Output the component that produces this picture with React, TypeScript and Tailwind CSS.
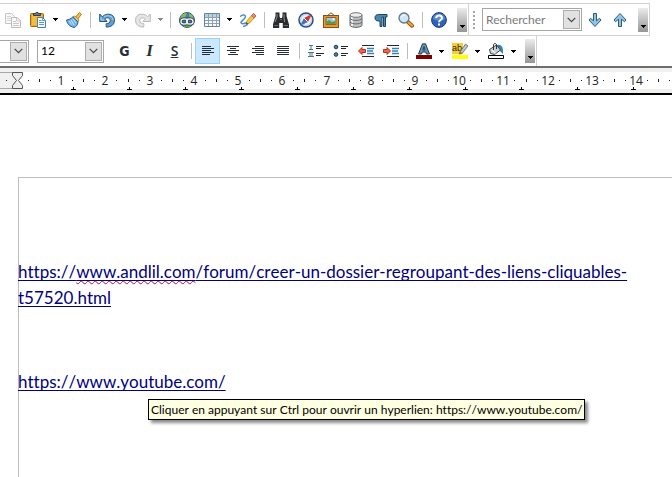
import React, { type ReactNode } from "react";

function Icon({ children }: { children: ReactNode }) {
  return (
    <svg width="16" height="16" viewBox="0 0 16 16" fill="none" aria-hidden="true">
      {children}
    </svg>
  );
}

function Tool({ label, active, children }: { label: string; active?: boolean; children: ReactNode }) {
  return (
    <button
      type="button"
      aria-label={label}
      className={
        active
          ? "flex h-[26px] w-[25px] shrink-0 items-center justify-center border border-[#99d1ff] bg-[#cce8ff]"
          : "flex h-[26px] w-[25px] shrink-0 items-center justify-center"
      }
    >
      {children}
    </button>
  );
}

function Caret({ label, muted }: { label: string; muted?: boolean }) {
  return (
    <button type="button" aria-label={label} className="flex h-[26px] w-[11px] shrink-0 items-center justify-center">
      <svg width="5" height="3" viewBox="0 0 5 3" shapeRendering="crispEdges" aria-hidden="true">
        <path d="M0 0h5v1H4v1H3v1H2V2H1V1H0z" fill={muted ? "#8c8c8c" : "#000"} />
      </svg>
    </button>
  );
}

function Sep() {
  return (
    <div className="flex w-2 shrink-0 justify-center">
      <div className="h-4 w-px bg-[#bdbdbd]" />
    </div>
  );
}

function Overflow({ label }: { label: string }) {
  return (
    <button
      type="button"
      aria-label={label}
      className="flex h-6 w-[10px] shrink-0 items-end justify-center bg-linear-to-b from-[#ececec] to-[#969696] pb-1"
    >
      <svg width="5" height="3" viewBox="0 0 5 3" shapeRendering="crispEdges" aria-hidden="true">
        <path d="M0 0h5v1H4v1H3v1H2V2H1V1H0z" fill="#000" />
      </svg>
    </button>
  );
}

function Chevron() {
  return (
    <span className="pointer-events-none flex h-[19px] w-[17px] shrink-0 items-center justify-center border border-[#adadad] bg-[#e1e1e1]">
      <svg width="9" height="6" viewBox="0 0 9 6" fill="none" aria-hidden="true">
        <path d="M.7.8 4.5 4.6 8.3.8" stroke="#444" strokeWidth="1.2" />
      </svg>
    </span>
  );
}

const CopyIcon = () => (
  <Icon>
    <path d="M.5 1.5h6l3 3v7h-9z" fill="#fafafa" stroke="#c6c6c6" />
    <path d="M2 4.5h4M2 6.5h5M2 8.5h5" stroke="#d2d2d2" />
    <path d="M6.500 5.500h5.500l3.500 3v7h-9z" fill="#fafafa" stroke="#bcbcbc" />
    <path d="M11.500 5.500v3.500h4M8 9.500h3M8 11.500h6M8 13.500h6" stroke="#c8c8c8" />
  </Icon>
);

const PasteIcon = () => (
  <Icon>
    <rect x=".5" y="1.500" width="13" height="13" rx="1" fill="#e9a820" stroke="#a8690b" />
    <path d="M2 3h10v10H2z" fill="#f3bd3b" />
    <path d="M3.500 3.500v-2h2L6 .5h2l.5 1h2v2z" fill="#6f7780" stroke="#38414b" />
    <path d="M7.500 5.500h5l3 3v7h-8z" fill="#f4faff" stroke="#4682b1" />
    <path d="M12.500 5.500v3h3M9 8.500h2.500M9 10.500h5M9 12.500h5" stroke="#5b9bca" />
  </Icon>
);

const BrushIcon = () => (
  <Icon>
    <path d="m9.500 5 4-4.500 2 1.800-3.700 4.800z" fill="#f4bd3b" stroke="#a66b13" strokeWidth=".8" />
    <path d="M7 4.500 9 4l4 4-1 2z" fill="#f0d084" stroke="#9a7a31" strokeWidth=".8" />
    <path d="M6.800 5C5 7 2.500 7.600.6 8c.4 3.500 3 6.500 7.400 7.500 2-.6 3.500-2.500 4-5.300z" fill="#72b3e8" stroke="#21589a" />
    <path d="m3 9 2.500 3.500M5 8l3 5M7 7l3 4" stroke="#c7e5fb" />
  </Icon>
);

const curve = "M.7 2v7.500h7.500L5.800 7.200C7 5 11.200 5.300 11.200 8.600c0 2.300-1.700 3.100-4 3.100v3.300c5 .3 8.300-2.400 8.300-6.800C15.500 1.800 8 .2 3.300 4.700z";

const UndoIcon = () => (
  <Icon>
    <path d={curve} fill="#5f9ecf" stroke="#27577f" />
    <path d="M2 5v3h3M5 5c3.500-2.500 9-1 9 3" stroke="#b6d9f0" />
  </Icon>
);

const RedoIcon = () => (
  <Icon>
    <g transform="matrix(-1 0 0 1 16 0)">
      <path d={curve} fill="#e5e5e5" stroke="#b9b9b9" />
    </g>
  </Icon>
);

const GlobeIcon = () => (
  <Icon>
    <circle cx="8" cy="8" r="7.400" fill="#407fab" stroke="#28536d" />
    <path d="M1.500 5c1.500-3 4-4.200 6.500-4L7 3.500 5 7H1zM10 1.200c3 1 4.500 3 5 6L12 7l-2-3z" fill="#88bd56" />
    <path d="M2 11h12l-3 4H5z" fill="#67a348" />
    <rect x="2" y="7" width="6.500" height="5" rx="2.500" stroke="#263944" strokeWidth="3" />
    <rect x="7.500" y="7" width="6.500" height="5" rx="2.500" stroke="#263944" strokeWidth="3" />
    <rect x="2" y="7" width="6.500" height="5" rx="2.500" stroke="#e6edf0" strokeWidth="1.500" />
    <rect x="7.500" y="7" width="6.500" height="5" rx="2.500" stroke="#e6edf0" strokeWidth="1.500" />
  </Icon>
);

const TableIcon = () => (
  <Icon>
    <path d="M.5 1.500h15v13H.5z" fill="#f5f9fc" stroke="#68829a" />
    <path d="M1 2h14v3H1z" fill="#b8d0e2" />
    <path d="M1 5.500h14M1 8.500h14M1 11.500h14M4.500 2v12M8.500 2v12M12.500 2v12" stroke="#8ba2b5" />
  </Icon>
);

const DrawIcon = () => (
  <Icon>
    <path d="M0 4.500c5-3 7-.5 4 2.500s-4 3.500-2 4.500 6-2 6-.5-3 3-5 3.500" stroke="#4b8fd2" strokeWidth="1.500" />
    <path d="m6 12.500 1-3.700L13.500 1.500 16 4 9.500 11z" fill="#f5cd45" stroke="#a77b19" strokeWidth=".8" />
    <path d="m11.500 3.700 2-2.300L16 3.800l-2 2.300z" fill="#e68a83" stroke="#b54f4b" strokeWidth=".7" />
    <path d="m6 12.500.5-2 1.500 1z" fill="#333" />
  </Icon>
);

const BinocularsIcon = () => (
  <Icon>
    <path d="M2.500.5h4V4l.5 2h2l.5-2V.5h4V4L15 9l1 3.500V16H9.800v-5H6.200v5H0v-3.500L1 9l1.500-5z" fill="#292b2d" />
    <path d="M4 2v3L2 10M11 2v3l.5 5" stroke="#8e9295" />
    <path d="M1 13.500h4.200M10.800 13.500H15M7 7.500h2" stroke="#686c70" />
  </Icon>
);

const CompassIcon = () => (
  <Icon>
    <circle cx="8" cy="8" r="7" fill="#edf4fa" stroke="#244e87" strokeWidth="1.500" />
    <circle cx="8" cy="8" r="5.400" stroke="#9eb5cf" strokeWidth=".7" />
    <path d="M13.800 2.200 6 6l4 4z" fill="#d83225" />
    <path d="M2.200 13.800 6 6l4 4z" fill="#3e73b7" />
    <path d="m6.300 6.300 3.300 3.300" stroke="#fff" />
  </Icon>
);

const GalleryIcon = () => (
  <Icon>
    <path d="M4 4 8 .8 12 4" stroke="#78542c" />
    <rect x=".5" y="3.500" width="15" height="12" fill="#e29b32" stroke="#8b4d13" />
    <path d="M3 5.500h10v7H3z" fill="#92cbed" stroke="#a35c17" />
    <path d="M3.500 9.500 6 8l3 2 3.500-1v3h-9z" fill="#609a39" />
    <circle cx="10.500" cy="7.300" r="1" fill="#fff" />
  </Icon>
);

const DatabaseIcon = () => (
  <Icon>
    <path d="M2 3v10.500C4 16 12 16 14 13.500V3z" fill="#bfc0c1" stroke="#656769" />
    <path d="M4 4v10" stroke="#f1f1f1" strokeWidth="2" />
    <path d="M2 6.500C4 9 12 9 14 6.500M2 10c2 2.500 10 2.500 12 0" stroke="#66696b" />
    <ellipse cx="8" cy="3" rx="6" ry="2.300" fill="#eee" stroke="#6e7072" />
  </Icon>
);

const PilcrowIcon = () => (
  <Icon>
    <path d="M14 2.500H5.700C3 2.500 2 4 2 5.800c0 2 1 3.200 3.500 3.200H7v5.500h2V5h1.500v9.500h2V5H14z" fill="#4b87ae" stroke="#1c4660" />
  </Icon>
);

const ZoomIcon = () => (
  <Icon>
    <path d="m10 10 4 3.700" stroke="#9b5d13" strokeWidth="4" strokeLinecap="round" />
    <path d="m10.500 10.500 3.500 3" stroke="#f2a738" strokeWidth="2" strokeLinecap="round" />
    <circle cx="6" cy="6" r="5" fill="#cce8f8" stroke="#68767f" strokeWidth="1.300" />
    <path d="M3.500 5.500c.5-2 2-2.500 3.500-2.500" stroke="#fff" />
  </Icon>
);

const HelpIcon = () => (
  <Icon>
    <circle cx="8" cy="8" r="7.400" fill="#2f62b6" stroke="#183d82" />
    <path d="M2 7c.3-7 11.500-7 12 0-3 2-8 2-12 0z" fill="#5c8cd2" />
    <path d="M5.300 6C5.300 2.800 11 2.700 11 6c0 2-3 2-3 4.200" stroke="#fff" strokeWidth="2" />
    <path d="M7 11.500h2v2H7z" fill="#fff" />
  </Icon>
);

const ArrowIcon = ({ up }: { up?: boolean }) => (
  <Icon>
    <g transform={up ? "rotate(180 8 8)" : undefined}>
      <path d="M6.500 1.500h3v7.300l3-2.500L14 8l-6 6.500L2 8l1.500-1.700 3 2.500z" fill="#93c4e5" stroke="#285a7d" strokeLinejoin="round" />
    </g>
  </Icon>
);

const linePaths = {
  left: "M2 3.500h9M2 5.500h12M2 7.500h9M2 9.500h12M2 11.500h8",
  center: "M2 3.500h12M5 5.500h6M2 7.500h12M5 9.500h6M3 11.500h10",
  right: "M5 3.500h9M2 5.500h12M5 7.500h9M2 9.500h12M6 11.500h8",
  justify: "M2 3.500h12M2 5.500h12M2 7.500h12M2 9.500h12M2 11.500h12",
};

const AlignIcon = ({ kind }: { kind: keyof typeof linePaths }) => (
  <Icon>
    <path d={linePaths[kind]} stroke="#222e38" />
  </Icon>
);

const NumberedIcon = () => (
  <Icon>
    <path d="M1 2.500h4M3 2v5M1 6.500h4M0 9.500h6M2 9v5M4 9v5M0 13.500h6" stroke="#48788e" />
    <path d="M8 3.500h8M8 5.500h5M8 10.500h8M8 12.500h5" stroke="#20262b" />
  </Icon>
);

const BulletsIcon = () => (
  <Icon>
    <circle cx="3" cy="4" r="1.800" fill="#4d7f9d" stroke="#183d57" />
    <circle cx="3" cy="11.500" r="1.800" fill="#4d7f9d" stroke="#183d57" />
    <path d="M8 3.500h7M8 5.500h5M8 10.500h7M8 12.500h5" stroke="#20262b" />
  </Icon>
);

const IndentIcon = ({ out }: { out?: boolean }) => (
  <Icon>
    <path d="M4 2.500h12M4 13.500h12" stroke="#20262b" />
    <path d="M9 5.500h7M9 8h6M9 10.500h7" stroke="#3783ba" strokeWidth="1.500" />
    <g transform={out ? undefined : "matrix(-1 0 0 1 8 0)"}>
      <path d="M.5 8 4 4.500v2h3.500v3H4v2z" fill="#f16843" stroke="#a92316" strokeWidth=".9" />
    </g>
  </Icon>
);

const FontColorIcon = () => (
  <Icon>
    <path d="M2.500 11 6.500.8h3L13.500 11h-3l-.8-2H6.200L5.500 11zm4.500-4h2L8 3.500z" fill="#6894b6" stroke="#203e56" />
    <path d="M0 12h16v4H0z" fill="#800000" />
  </Icon>
);

const HighlightIcon = () => (
  <Icon>
    <path d="M0 0h11v11H0z" fill="#f6ce31" />
    <text x="0" y="8" fill="#222" className="font-['Liberation_Sans'] text-[9px]">ab</text>
    <path d="m8 9 5.500-8L16 3l-6 7.500z" fill="#c3c5c7" stroke="#5b5f64" strokeWidth=".8" />
    <path d="m7.500 8.500 3 2.500-4 .5z" fill="#9b672d" />
    <path d="M0 12h16v4H0z" fill="#ffff00" />
  </Icon>
);

const FillIcon = () => (
  <Icon>
    <path d="M9 2c4.500-1.500 6.500 2 6 9l-3-3z" fill="#3184b8" />
    <path d="M1.500 6.500 8.500 2l4 5-6 4.500-4-1z" fill="#c9ced1" stroke="#3b444b" />
    <path d="M5.500 7V2c0-2 3-2 3 0v4" stroke="#333" />
    <path d="m3.500 7 4 3" stroke="#fff" />
    <path d="M.5 12.500h15v3H.5z" fill="#fff" stroke="#000" />
  </Icon>
);

const ORIGIN = 17;
const CM = 44.22;
const TAB = 56;

function Ruler() {
  const cms = Array.from({ length: 15 }, (_, i) => i);
  return (
    <div className="overflow-hidden border-t-2 border-b-2 border-t-[#6e6e6e] border-b-black bg-[#f0f0f0] pt-1">
      <svg width="100%" height="21" aria-label="Règle" role="img" className="block">
        <rect width="100%" height="17" fill="#fff" />
        <rect width={ORIGIN} height="17" fill="#f0f0f0" />
        <path d={`M0 .5h${ORIGIN}M0 16.500h${ORIGIN}`} stroke="#a8a8a8" />
        <rect x="6" y="8" width="1" height="1" fill="#222" />
        {cms.map((n) => {
          const x = ORIGIN + n * CM;
          return (
            <g key={n} fill="#222" shapeRendering="crispEdges">
              <rect x={Math.round(x + CM / 4)} y="8" width="1" height="1" />
              <rect x={Math.round(x + CM / 2)} y="7" width="1" height="3" />
              <rect x={Math.round(x + (CM * 3) / 4)} y="8" width="1" height="1" />
              {n > 0 && (
                <text x={Math.round(x)} y="13" textAnchor="middle" className="font-['Open_Sans',sans-serif] text-[12px]">
                  {n}
                </text>
              )}
            </g>
          );
        })}
        {Array.from({ length: 11 }, (_, i) => ORIGIN + (i + 1) * TAB).map((x) => (
          <path key={x} d={`M${x - 2} 17.500h5M${x + 0.5} 15v3`} stroke="#000" shapeRendering="crispEdges" />
        ))}
        <path d="M12.500.5h10v3l-4 5 4 5v3h-10v-3l4-5-4-5z" fill="#eee" stroke="#555" />
      </svg>
    </div>
  );
}

export default function App() {
  return (
    <main className="min-h-screen overflow-hidden bg-white font-['Open_Sans','Noto_Sans',sans-serif] text-black">
      <header className="pt-[3px]">
        <div role="toolbar" aria-label="Standard" className="flex h-8 w-[650px] items-center border-t border-r border-[#d2d2d2]">
          <Tool label="Copier"><CopyIcon /></Tool>
          <Tool label="Coller"><PasteIcon /></Tool>
          <Caret label="Options de collage" />
          <Tool label="Cloner le formatage"><BrushIcon /></Tool>
          <Sep />
          <Tool label="Annuler"><UndoIcon /></Tool>
          <Caret label="Historique d'annulation" />
          <Tool label="Rétablir"><RedoIcon /></Tool>
          <Caret label="Historique de rétablissement" muted />
          <Sep />
          <Tool label="Hyperlien"><GlobeIcon /></Tool>
          <Tool label="Tableau"><TableIcon /></Tool>
          <Caret label="Taille du tableau" />
          <Tool label="Dessin"><DrawIcon /></Tool>
          <Sep />
          <Tool label="Rechercher et remplacer"><BinocularsIcon /></Tool>
          <Tool label="Navigateur"><CompassIcon /></Tool>
          <Tool label="Galerie"><GalleryIcon /></Tool>
          <Tool label="Sources de données"><DatabaseIcon /></Tool>
          <Tool label="Caractères non imprimables"><PilcrowIcon /></Tool>
          <Tool label="Zoom"><ZoomIcon /></Tool>
          <Sep />
          <Tool label="Aide"><HelpIcon /></Tool>
          <div className="ml-[6px] flex h-full items-center border-r border-[#d2d2d2] pr-px">
            <Overflow label="Plus d'outils standard" />
          </div>
          <div className="mx-1 h-[18px] border-l-2 border-dotted border-[#a5a5a5]" />
          <div className="ml-[3px] flex h-[23px] w-[100px] items-center border border-[#a6a6a6] pr-px">
            <input
              type="text"
              aria-label="Rechercher"
              placeholder="Rechercher"
              className="w-0 grow pl-[3px] font-['Lato'] text-[12px] leading-4 outline-none placeholder:text-[#7a7a7a]"
            />
            <button type="button" aria-label="Recherches récentes"><Chevron /></button>
          </div>
          <Tool label="Suivant"><ArrowIcon /></Tool>
          <Tool label="Précédent"><ArrowIcon up /></Tool>
          <div className="ml-auto flex pr-px"><Overflow label="Plus d'outils de recherche" /></div>
        </div>
        <div className="w-[650px] border-t border-[#d2d2d2]">
          <div role="toolbar" aria-label="Formatage" className="flex h-[30px] w-[537px] items-center border-r border-[#d2d2d2]">
            <div className="mr-2 flex h-[23px] w-[29px] shrink-0 items-center border border-l-0 border-[#a6a6a6] pr-px">
              <select aria-label="Police" className="w-0 grow appearance-none outline-none" />
              <Chevron />
            </div>
            <div className="mr-2 flex h-[23px] w-[67px] shrink-0 items-center border border-[#a6a6a6] pr-px">
              <select aria-label="Taille de police" defaultValue="12" className="w-0 grow appearance-none pl-[3px] font-['Lato'] text-[12px] leading-4 outline-none">
                <option>10</option>
                <option>12</option>
                <option>14</option>
              </select>
              <Chevron />
            </div>
            <Tool label="Gras"><span className="font-['DejaVu_Sans_Condensed','DejaVu_Sans'] text-[14px] leading-5 font-bold text-[#273039]">G</span></Tool>
            <Tool label="Italique"><span className="font-['Liberation_Serif'] text-[17px] leading-5 font-bold text-[#273039] italic">I</span></Tool>
            <Tool label="Souligné"><span className="font-['Open_Sans'] text-[14px] leading-5 font-semibold text-[#273039] underline">S</span></Tool>
            <Sep />
            <Tool label="Aligner à gauche" active><AlignIcon kind="left" /></Tool>
            <Tool label="Centrer"><AlignIcon kind="center" /></Tool>
            <Tool label="Aligner à droite"><AlignIcon kind="right" /></Tool>
            <Tool label="Justifier"><AlignIcon kind="justify" /></Tool>
            <Sep />
            <Tool label="Numérotation"><NumberedIcon /></Tool>
            <Tool label="Puces"><BulletsIcon /></Tool>
            <Tool label="Diminuer le retrait"><IndentIcon out /></Tool>
            <Tool label="Augmenter le retrait"><IndentIcon /></Tool>
            <Sep />
            <Tool label="Couleur de police"><FontColorIcon /></Tool>
            <Caret label="Choisir la couleur de police" />
            <Tool label="Surlignage"><HighlightIcon /></Tool>
            <Caret label="Choisir le surlignage" />
            <Tool label="Couleur d'arrière-plan"><FillIcon /></Tool>
            <Caret label="Choisir l'arrière-plan" />
            <div className="ml-auto flex pr-px"><Overflow label="Plus d'outils de formatage" /></div>
          </div>
        </div>
        <Ruler />
      </header>

      <article className="mt-[82px] ml-[18px] min-h-[300px] border-t border-l border-[#bfbfbf] pt-[81px] font-['Lato','Carlito',sans-serif] text-[17px] leading-[26px] text-[#000080] [font-kerning:none] [font-variant-ligatures:none]">
        <p className="-ml-px">
          <a href="#dossier" className="underline decoration-1 underline-offset-2 [text-decoration-skip-ink:none]">
            https://
            <span className="underline decoration-[#b01050] decoration-wavy decoration-1 underline-offset-2">www.andlil.com</span>
            /forum/creer-un-dossier-regroupant-des-liens-cliquables-
            <br />
            t57520.html
          </a>
        </p>
        <p className="relative mt-[58px] -ml-px">
          <a href="#youtube" aria-describedby="link-tip" className="underline decoration-1 underline-offset-2 [text-decoration-skip-ink:none]">
            https://www.youtube.com/
          </a>
          <span
            id="link-tip"
            role="tooltip"
            className="absolute top-[30px] left-[130px] border border-black bg-[#ffffe1] px-0.5 text-[12px] leading-[19px] whitespace-nowrap text-black shadow-[3px_3px_3px_rgba(0,0,0,0.45)]"
          >
            Cliquer en appuyant sur Ctrl pour ouvrir un hyperlien: https://www.youtube.com/
          </span>
        </p>
      </article>
    </main>
  );
}
